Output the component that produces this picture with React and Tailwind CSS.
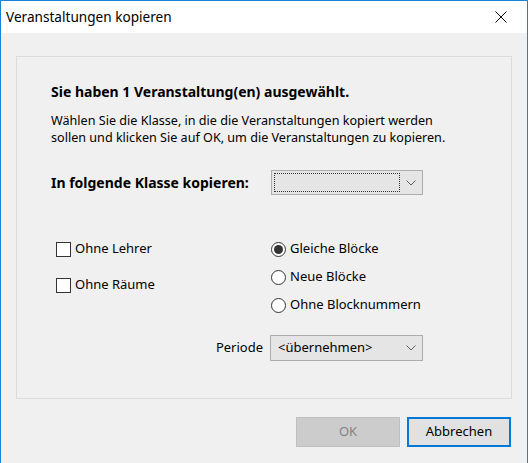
import React from "react";

const font = { fontFamily: '"Segoe UI", "Noto Sans", "Liberation Sans", sans-serif' };

const Chevron = ({ className = "" }) => (
  <svg className={className} width="10" height="6" viewBox="0 0 10 6" fill="none">
    <path d="M0.5 0.5 L5 5 L9.5 0.5" stroke="#5f5f5f" strokeWidth="1" />
  </svg>
);

const Checkbox = ({ label }) => (
  <label className="flex items-center h-[18px]">
    <span className="w-[15px] h-[15px] border border-[#333333] bg-white" />
    <span className="ml-[4px] text-[13px] text-black">{label}</span>
  </label>
);

const Radio = ({ label, checked }) => (
  <label className="flex items-center h-[28px]">
    <span className="w-[15px] h-[15px] rounded-full border border-[#333333] bg-white flex items-center justify-center">
      {checked && <span className="w-[9px] h-[9px] rounded-full bg-[#333333]" />}
    </span>
    <span className="ml-[4px] text-[13px] text-black">{label}</span>
  </label>
);

export default function App() {
  return (
    <div
      className="w-[528px] h-[463px] border-l border-r border-t border-[#1883d7] bg-[#f0f0f0] flex flex-col"
      style={font}
    >
      {/* Title bar */}
      <div className="h-[32px] bg-white flex items-center justify-between pl-[5px] pr-[20px]">
        <span className="text-[13.6px] text-black">Veranstaltungen kopieren</span>
        <svg width="12" height="12" viewBox="0 0 12 12">
          <path d="M0.5 0.5 L11.5 11.5 M11.5 0.5 L0.5 11.5" stroke="#000" strokeWidth="1" />
        </svg>
      </div>

      {/* Body */}
      <div className="flex-1 px-[15px] pt-[23px]">
        <div className="h-[343px] border border-[#dcdcdc] pl-[34px] pt-[27px]">
          <p className="text-[14px] font-bold leading-[16px]">Sie haben 1 Veranstaltung(en) ausgewählt.</p>
          <p className="mt-[12px] text-[12.6px] leading-[17px] text-black">
            Wählen Sie die Klasse, in die die Veranstaltungen kopiert werden
            <br />
            sollen und klicken Sie auf OK, um die Veranstaltungen zu kopieren.
          </p>

          <div className="mt-[24px] flex items-center h-[25px]">
            <span className="w-[220px] text-[14px] font-bold">In folgende Klasse kopieren:</span>
            <div className="w-[152px] h-[25px] border border-[#adadad] bg-[#e5e5e5] flex items-center pl-[2px] pr-[6px]">
              <div className="w-[126px] h-[19px] border border-dotted border-[#333333]" />
              <Chevron className="ml-auto" />
            </div>
          </div>

          <div className="mt-[45px] flex">
            <div className="w-[220px] pl-[5px] flex flex-col gap-[18px]">
              <Checkbox label="Ohne Lehrer" />
              <Checkbox label="Ohne Räume" />
            </div>
            <div className="flex flex-col -mt-[5px]">
              <Radio label="Gleiche Blöcke" checked />
              <Radio label="Neue Blöcke" />
              <Radio label="Ohne Blocknummern" />
            </div>
          </div>

          <div className="mt-[16px] flex items-center">
            <span className="w-[219px] text-right pr-[7px] text-[13px]">Periode</span>
            <div className="w-[153px] h-[26px] border border-[#adadad] bg-[#e5e5e5] flex items-center pl-[7px] pr-[6px]">
              <span className="text-[13px]">&lt;übernehmen&gt;</span>
              <Chevron className="ml-auto" />
            </div>
          </div>
        </div>

        {/* Buttons */}
        <div className="mt-[18px] flex justify-end gap-[7px] pr-[1px]">
          <button className="w-[104px] h-[30px] border border-[#bfbfbf] bg-[#cccccc] text-[13px] text-[#838383]">
            OK
          </button>
          <button className="w-[104px] h-[30px] border-2 border-[#0078d7] bg-[#e1e1e1] text-[13px] text-black">
            Abbrechen
          </button>
        </div>
      </div>
    </div>
  );
}
